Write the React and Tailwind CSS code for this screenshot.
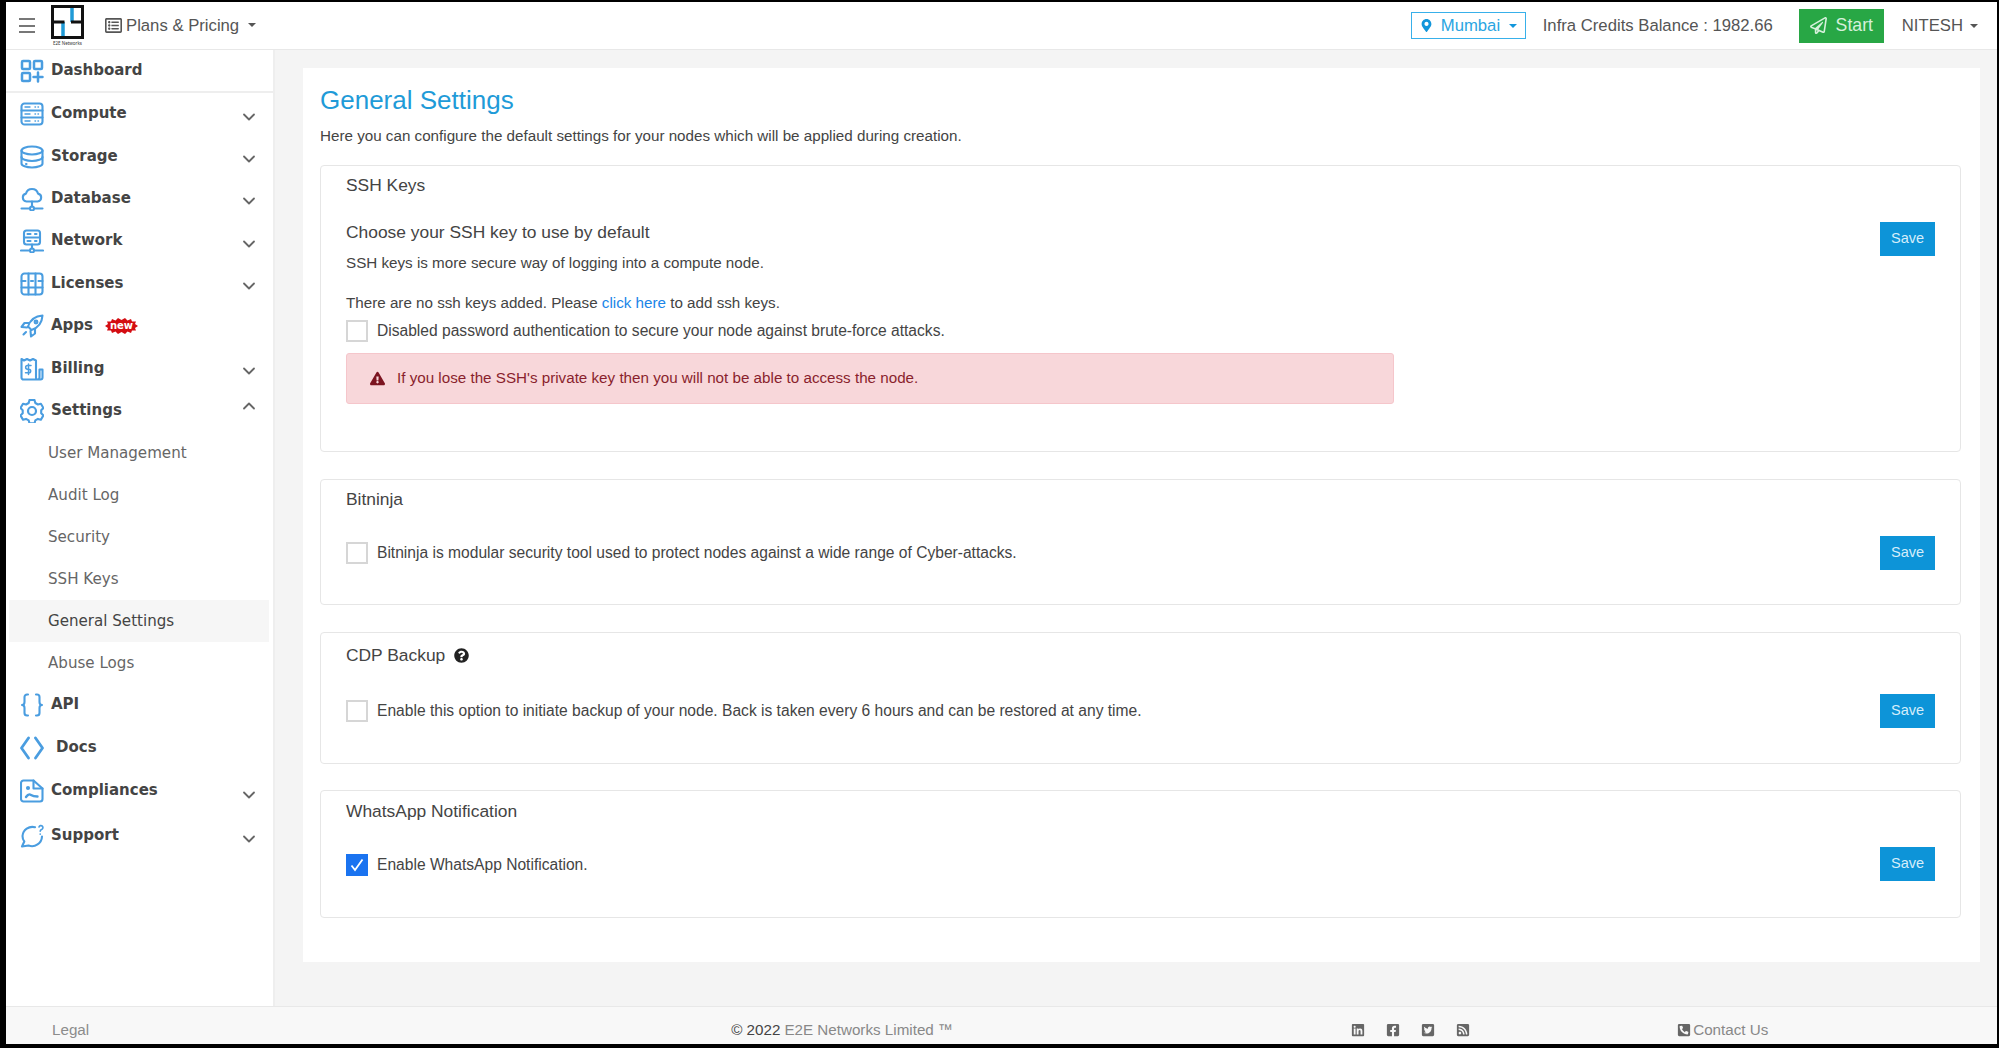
import { ChevronDown, ChevronUp } from 'lucide-react';
import {
  FaExclamationTriangle,
  FaFacebookSquare,
  FaLinkedin,
  FaMapMarkerAlt,
  FaPhoneSquareAlt,
  FaQuestionCircle,
  FaRegListAlt,
  FaRegPaperPlane,
  FaRssSquare,
  FaTwitterSquare,
} from 'react-icons/fa';

const Icon = ({ children }) => (
  <svg width="24" height="24" viewBox="0 0 24 24" fill="none" stroke="#4a9de0" strokeWidth="2.1" strokeLinecap="round" strokeLinejoin="round" className="shrink-0">
    {children}
  </svg>
);

const icons = {
  dashboard: (
    <Icon>
      <rect x="2" y="2" width="8" height="8" rx="1" strokeWidth="2.5" />
      <rect x="14" y="2" width="8" height="8" rx="1" strokeWidth="2.5" />
      <rect x="2" y="14" width="8" height="8" rx="1" strokeWidth="2.5" />
      <path d="M18 13.5v9M13.5 18h9" strokeWidth="2.5" />
    </Icon>
  ),
  compute: (
    <Icon>
      <rect x="1.5" y="1.5" width="21" height="21" rx="3" />
      <path d="M1.5 8.5h21M1.5 15.5h21" />
      <path d="M5 5h5M15 5h.5M18 5h.5M5 12h5M15 12h.5M18 12h.5M5 19h5M15 19h.5M18 19h.5" strokeWidth="1.4" />
    </Icon>
  ),
  storage: (
    <Icon>
      <ellipse cx="12" cy="5.5" rx="10.5" ry="4" />
      <path d="M1.5 5.5v13c0 2.2 4.7 4 10.5 4s10.5-1.8 10.5-4v-13" />
      <path d="M1.5 12c0 2.2 4.7 4 10.5 4s10.5-1.8 10.5-4M6 19h.5" />
    </Icon>
  ),
  database: (
    <Icon>
      <path d="M6.5 14.5a4 4 0 0 1-.5-7.9 6.2 6.2 0 0 1 12 0 4 4 0 0 1-.5 7.9z" />
      <path d="M12 14.5v5M1.5 21.5h8M14.5 21.5h8" />
      <circle cx="12" cy="21.5" r="2" />
    </Icon>
  ),
  network: (
    <Icon>
      <rect x="4" y="1.5" width="16" height="14" rx="2.5" />
      <path d="M4 8.5h16M7.5 5h3M15 5h1.5M7.5 12h3M15 12h1.5M12 15.5v4M1 21.5h8.5M14.5 21.5h8.5" />
      <circle cx="12" cy="21.5" r="2" />
    </Icon>
  ),
  licenses: (
    <Icon>
      <rect x="1.5" y="1.5" width="21" height="21" rx="3" />
      <path d="M8.5 1.5v21M15.5 1.5v21M1.5 15.5h21M1.5 9h4M11 9h2M18.5 9h4" />
    </Icon>
  ),
  apps: (
    <Icon>
      <path d="M8 12.5C10 6.5 15 2 22.5 1.5 22 9 17.5 14 11.5 16z" />
      <path d="M9 9H4.5L1.5 13l5.5.5M15 15v4.5L11 22.5l-.5-5.5" />
      <path d="M6 18l-2.5 2.5" />
      <circle cx="16" cy="8" r="1.4" />
    </Icon>
  ),
  billing: (
    <Icon>
      <path d="M17.5 22.5H3.5a2 2 0 0 1-2-2V2l2.5 1.5L7 2l3 1.5L13 2l3 1.5V20.5c0 1.1.7 2 1.5 2a2 2 0 0 0 2-2v-8h3v8a2 2 0 0 1-2 2z" />
      <path d="M11 8.5H7.5a1.7 1.7 0 0 0 0 3.7h1.4a1.7 1.7 0 0 1 0 3.6H5.5M8.5 7v10.5" strokeWidth="1.5" />
    </Icon>
  ),
  settings: (
    <Icon>
      <path d="M9.5 1.5h5l.8 3 2.6 1.5 3-.8 2.5 4.3-2.2 2.2v3l2.2 2.2-2.5 4.3-3-.8-2.6 1.5-.8 3h-5l-.8-3L6 20.4l-3 .8L.5 16.9l2.2-2.2v-3L.5 9.5 3 5.2l3 .8L8.7 4.5z" transform="translate(0 -.5)" />
      <circle cx="12" cy="12" r="4" strokeWidth="2.2" />
    </Icon>
  ),
  api: (
    <Icon>
      <path d="M8 1.5H7A2.500 2.500 0 0 0 4.500 4v5c0 1.700-1 3-2.500 3 1.500 0 2.500 1.300 2.500 3v5A2.500 2.500 0 0 0 7 22.500h1M16 1.500h1A2.500 2.500 0 0 1 19.500 4v5c0 1.700 1 3 2.500 3-1.500 0-2.500 1.300-2.500 3v5a2.500 2.500 0 0 1-2.500 2.500h-1" />
    </Icon>
  ),
  docs: (
    <Icon>
      <path d="M8.500 2L1.500 12l7 10M15.500 2l7 10-7 10" strokeWidth="2.8" />
    </Icon>
  ),
  compliances: (
    <Icon>
      <path d="M3.500 1.500h10l9 8v10.500a2.500 2.500 0 0 1-2.500 2.500H3.500A2.500 2.500 0 0 1 1 20V4a2.500 2.500 0 0 1 2.500-2.500z" />
      <path d="M13.500 1.500v8h9" />
      <path d="M6 18c2-3 3.500-3 5-2s3 1.500 6.500 1.500" strokeWidth="2.4" />
      <circle cx="8" cy="9" r="1" />
    </Icon>
  ),
  support: (
    <Icon>
      <path d="M15 3.200A10 10 0 0 0 2.500 12c0 2.200.6 4 1.800 5.500L2 22.500l6.500-1a10 10 0 0 0 13.500-9" />
      <path d="M19 3a2 2 0 1 1 2.500 2.500c-.7.300-1.300.8-1.300 1.800M20.200 10v.2" strokeWidth="1.6" />
    </Icon>
  ),
};

const topItems = [
  { key: 'compute', label: 'Compute', chevron: true },
  { key: 'storage', label: 'Storage', chevron: true },
  { key: 'database', label: 'Database', chevron: true },
  { key: 'network', label: 'Network', chevron: true },
  { key: 'licenses', label: 'Licenses', chevron: true },
  { key: 'apps', label: 'Apps', badge: true },
  { key: 'billing', label: 'Billing', chevron: true },
];

const subItems = ['User Management', 'Audit Log', 'Security', 'SSH Keys', 'General Settings', 'Abuse Logs'];

function NewBadge() {
  return (
    <span className="relative ml-[12px] inline-flex h-[16px] w-[33px] items-center justify-center">
      <svg viewBox="0 0 33 16" className="absolute inset-0 h-full w-full" fill="#d40d12">
        <polygon points="0,8 3,6 2,3.500 6,3.500 7,1 10.500,2.500 13,0 16.500,2 20,0 22.500,2.500 26,1 27,3.500 31,3.500 30,6 33,8 30,10 31,12.500 27,12.500 26,15 22.500,13.500 20,16 16.500,14 13,16 10.500,13.500 7,15 6,12.500 2,12.500 3,10" />
      </svg>
      <span className="relative text-[10px] leading-none font-bold text-white font-['DejaVu_Sans',sans-serif]">new</span>
    </span>
  );
}

function NavRow({ item, className = 'h-[42.4px]', chevronClass = 'mt-[5px]' }) {
  return (
    <div className={`flex items-center pl-[14px] pr-[14px] ${className}`}>
      <span className="flex w-[31px] shrink-0 items-center">{icons[item.key]}</span>
      <span className={`-mt-[1px] text-[15px] leading-none font-bold text-[#444] ${item.labelClass || ''}`}>{item.label}</span>
      {item.badge && <NewBadge />}
      {item.chevron && <ChevronDown size={20} strokeWidth={2.2} className={`ml-auto text-[#666] ${chevronClass}`} />}
    </div>
  );
}

function Sidebar() {
  return (
    <aside className="flex w-[269px] shrink-0 flex-col border-r-2 border-[#eeeeee] bg-white font-['DejaVu_Sans',sans-serif]">
      <div className="border-b-2 border-[#eeeeee]">
        <NavRow item={{ key: 'dashboard', label: 'Dashboard' }} className="h-[41px]" />
      </div>
      {topItems.map((item) => (
        <NavRow key={item.key} item={item} />
      ))}
      <div className="flex h-[42.4px] items-center pl-[14px] pr-[14px]">
        <span className="flex w-[31px] shrink-0 items-center">{icons.settings}</span>
        <span className="-mt-[1px] text-[15px] leading-none font-bold text-[#444]">Settings</span>
        <ChevronUp size={20} strokeWidth={2.2} className="ml-auto -mt-[10px] text-[#666]" />
      </div>
      {subItems.map((label) => (
        <div
          key={label}
          className={`ml-[3px] mr-[4px] flex h-[42px] items-center pl-[39px] text-[15.1px] ${label === 'General Settings' ? 'bg-[#f6f6f6] text-[#444]' : 'text-[#666]'}`}
        >
          {label}
        </div>
      ))}
      <NavRow item={{ key: 'api', label: 'API' }} />
      <NavRow item={{ key: 'docs', label: 'Docs', labelClass: 'ml-[5px]' }} />
      <NavRow item={{ key: 'compliances', label: 'Compliances', chevron: true }} className="h-[44px]" chevronClass="mt-[8px]" />
      <NavRow item={{ key: 'support', label: 'Support', chevron: true }} className="h-[46px]" chevronClass="mt-[6px]" />
    </aside>
  );
}

function Header() {
  return (
    <header className="flex h-[48px] shrink-0 items-center border-b border-[#e8e8e8] bg-white text-[16.7px] text-[#555]">
      <div className="ml-[13px] flex h-[15px] w-[16px] flex-col justify-between">
        <span className="h-[2px] bg-[#777]" />
        <span className="h-[2px] bg-[#777]" />
        <span className="h-[2px] bg-[#777]" />
      </div>
      <div className="ml-[16px] flex w-[33px] flex-col items-center">
        <svg width="33" height="35" viewBox="0 0 33 35" fill="none">
          <path d="M21 2v15M12 17v15" stroke="#1f9ad6" strokeWidth="3.5" />
          <path d="M1.500 1.500h30v31h-30zM1.500 17h12M20 17h11.500" stroke="#111" strokeWidth="3" />
        </svg>
        <span className="mt-px whitespace-nowrap text-[4.5px] leading-none text-[#333]">E2E Networks</span>
      </div>
      <div className="ml-[21px] flex items-center">
        <FaRegListAlt size={17} className="text-[#555]" />
        <span className="ml-[4px] font-['Liberation_Sans',sans-serif]">Plans &amp; Pricing</span>
        <span className="ml-[9px] h-0 w-0 border-x-[4px] border-t-[4px] border-x-transparent border-t-[#555]" />
      </div>
      <div className="ml-auto flex items-center font-['Liberation_Sans',sans-serif]">
        <div className="flex h-[27px] w-[115px] items-center border border-[#38b0ea] pl-[8px] text-[#2aa5e2]">
          <FaMapMarkerAlt size={13} className="text-[#1296db]" />
          <span className="ml-[8px]">Mumbai</span>
          <span className="ml-[9px] h-0 w-0 border-x-[4px] border-t-[4px] border-x-transparent border-t-[#1296db]" />
        </div>
        <span className="ml-[17px]">Infra Credits Balance : 1982.66</span>
        <button className="ml-[26px] flex h-[34px] w-[85px] items-center justify-center gap-[9px] bg-[#28a745] text-[17.7px] text-[#d6f0db]">
          <FaRegPaperPlane size={17} />
          Start
        </button>
        <span className="ml-[18px]">NITESH</span>
        <span className="ml-[7px] mr-[19px] h-0 w-0 border-x-[4px] border-t-[4px] border-x-transparent border-t-[#555]" />
      </div>
    </header>
  );
}

function CheckLine({ checked, children }) {
  return (
    <div className="flex items-center text-[15.6px] text-[#444]">
      {checked ? (
        <span className="flex h-[22px] w-[22px] shrink-0 items-center justify-center bg-[#1a73f0]">
          <svg width="16" height="16" viewBox="0 0 16 16" fill="none" stroke="#fff" strokeWidth="1.8">
            <path d="M2.500 8.500l3.500 4.500 7.500-10.500" />
          </svg>
        </span>
      ) : (
        <span className="h-[22px] w-[22px] shrink-0 border-2 border-[#d6d6d6] bg-white" />
      )}
      <span className="ml-[9px]">{children}</span>
    </div>
  );
}

function SaveButton({ className }) {
  return (
    <button className={`flex h-[34px] w-[55px] shrink-0 items-center justify-center bg-[#0d94d8] text-[14.5px] text-[#d5eefb] ${className}`}>
      Save
    </button>
  );
}

function Card({ title, titleExtra, className, children, saveClass }) {
  return (
    <section className={`flex rounded-[4px] border border-[#e6e6e6] pl-[25px] pr-[25px] ${className}`}>
      <div className="min-w-0 flex-1">
        <h3 className="flex items-center text-[17.4px] leading-[20px] font-normal text-[#444]">
          {title}
          {titleExtra}
        </h3>
        {children}
      </div>
      <SaveButton className={saveClass} />
    </section>
  );
}

function Main() {
  return (
    <main className="min-w-0 flex-1 bg-[#f4f4f4] pt-[18px] pl-[28px] pr-[17px]">
      <div className="h-[894px] bg-white pl-[17px] pr-[19px] pt-[17px] font-['Liberation_Sans',sans-serif]">
        <h1 className="text-[26px] leading-[30px] font-normal text-[#1f9bd8]">General Settings</h1>
        <p className="mt-[11px] text-[15.2px] leading-[20px] text-[#444]">
          Here you can configure the default settings for your nodes which will be applied during creation.
        </p>
        <Card title="SSH Keys" className="mt-[19px] h-[287px] pt-[9px]" saveClass="mt-[47px]">
          <p className="mt-[27px] text-[17.4px] leading-[20px] text-[#444]">Choose your SSH key to use by default</p>
          <p className="mt-[11px] text-[15.2px] leading-[20px] text-[#444]">SSH keys is more secure way of logging into a compute node.</p>
          <p className="mt-[20px] text-[15.2px] leading-[20px] text-[#444]">
            There are no ssh keys added. Please <span className="text-[#1a85e8]">click here</span> to add ssh keys.
          </p>
          <div className="mt-[6px]">
            <CheckLine>Disabled password authentication to secure your node against brute-force attacks.</CheckLine>
          </div>
          <div className="mt-[11px] flex h-[51px] w-[1048px] items-center rounded-[3px] border border-[#f5c6cb] bg-[#f8d7da] pl-[23px] text-[15.2px] text-[#8a1f2d]">
            <FaExclamationTriangle size={15} className="text-[#7c1420]" />
            <span className="ml-[12px]">If you lose the SSH's private key then you will not be able to access the node.</span>
          </div>
        </Card>
        <Card title="Bitninja" className="mt-[27px] h-[126px] pt-[9px]" saveClass="mt-[47px]">
          <div className="mt-[32px]">
            <CheckLine>Bitninja is modular security tool used to protect nodes against a wide range of Cyber-attacks.</CheckLine>
          </div>
        </Card>
        <Card
          title="CDP Backup"
          titleExtra={<FaQuestionCircle size={15} className="ml-[9px] text-[#222]" />}
          className="mt-[27px] h-[132px] pt-[12px]"
          saveClass="mt-[49px]"
        >
          <div className="mt-[34px]">
            <CheckLine>Enable this option to initiate backup of your node. Back is taken every 6 hours and can be restored at any time.</CheckLine>
          </div>
        </Card>
        <Card title="WhatsApp Notification" className="mt-[26px] h-[128px] pt-[10px]" saveClass="mt-[46px]">
          <div className="mt-[32px]">
            <CheckLine checked>Enable WhatsApp Notification.</CheckLine>
          </div>
        </Card>
      </div>
    </main>
  );
}

function Footer() {
  const social = [FaLinkedin, FaFacebookSquare, FaTwitterSquare, FaRssSquare];
  return (
    <footer className="flex h-[38px] shrink-0 items-center border-t border-[#e8e8e8] bg-[#f8f8f8] pt-[9px] font-['Liberation_Sans',sans-serif] text-[15.2px] text-[#888]">
      <span className="ml-[46px] text-[#8c8c8c]">Legal</span>
      <span className="ml-[642px] text-[#444]">© 2022</span>
      <span className="ml-[4px]">E2E Networks Limited ™</span>
      <div className="ml-[398px] flex items-center gap-[21px] text-[#666]">
        {social.map((Glyph, i) => (
          <Glyph key={i} size={14} />
        ))}
      </div>
      <div className="ml-[207px] flex items-center gap-[2px]">
        <FaPhoneSquareAlt size={14} className="text-[#666]" />
        <span>Contact Us</span>
      </div>
    </footer>
  );
}

export default function App() {
  return (
    <div className="flex h-[1048px] w-full flex-col overflow-hidden bg-black pt-[2px] pb-[4px] pl-[6px] pr-[2px]">
      <Header />
      <div className="flex min-h-0 flex-1">
        <Sidebar />
        <Main />
      </div>
      <Footer />
    </div>
  );
}
